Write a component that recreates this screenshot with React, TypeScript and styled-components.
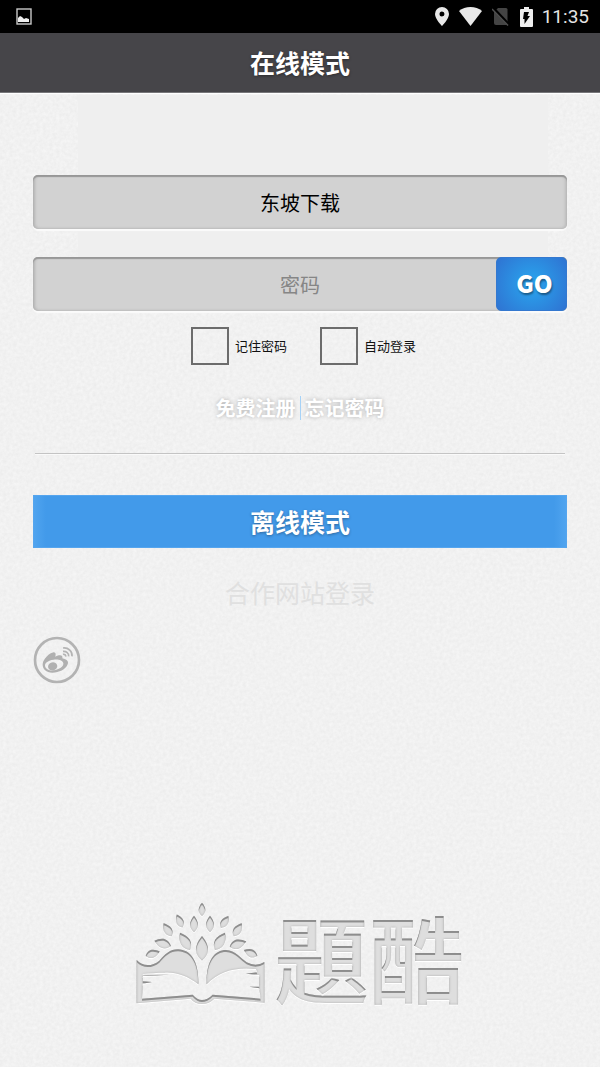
import React from 'react';
import styled, { createGlobalStyle } from 'styled-components';

const GlobalStyle = createGlobalStyle`
  * { box-sizing: border-box; }
  body {
    margin: 0;
    background: #f1f1f1;
    font-family: "Noto Sans CJK SC", sans-serif;
  }
`;

const Screen = styled.div`
  position: relative;
  isolation: isolate;
  display: flex;
  flex-direction: column;
  min-height: 100vh;
`;

const Paper = styled.svg`
  position: absolute;
  inset: 0;
  z-index: -1;
  width: 100%;
  height: 100%;
`;

const StatusBar = styled.div`
  display: flex;
  align-items: center;
  height: 33px;
  padding: 0 11px 0 16px;
  background: #000;
  color: #e4e4e4;
  font: 400 19px/33px Roboto, sans-serif;
`;

const StatusIcons = styled.div`
  display: flex;
  align-items: center;
  gap: 10px;
  margin-left: auto;
  margin-right: 9px;
`;

const TitleBar = styled.header`
  display: flex;
  align-items: center;
  justify-content: center;
  height: 60px;
  padding-bottom: 2px;
  background: #464549;
  border-bottom: 1px solid #77777a;
  box-shadow: 0 1px 1px #fff;
`;

const Title = styled.h1`
  margin: 0;
  color: #fff;
  font-size: 25px;
  line-height: 36px;
  font-weight: 700;
  text-shadow: 0 1px 3px #0006;
`;

const Main = styled.main`
  flex: 1;
  display: flex;
  flex-direction: column;
  padding: 0 33px 63px;
`;

const Form = styled.form`
  display: flex;
  flex-direction: column;
`;

const Fields = styled.div`
  display: flex;
  flex-direction: column;
  gap: 28px;
  margin: 0 -33px;
  padding: 82px 33px 0;
  background: linear-gradient(#efefef, #efefef) 78px 2px / calc(100% - 130px) 100% no-repeat;
`;

const Field = styled.div`
  display: flex;
  height: 54px;
  border-radius: 5px;
  background: #d2d2d2;
  box-shadow:
    inset 0 2px 1px #979797,
    inset 2px 0 3px #b4b4b4,
    inset -2px 0 3px #bcbcbc,
    0 2px 1px #fbfbfb;
`;

const TextInput = styled.input<{ $inset?: boolean }>`
  flex: 1;
  min-width: 0;
  padding: 2px 0 0 ${p => (p.$inset ? '71px' : '0')};
  border: 0;
  outline: 0;
  background: transparent;
  color: #000;
  font: 400 20px/28px "Noto Sans CJK SC", sans-serif;
  text-align: center;
  &::placeholder { color: #868686; opacity: 1; }
`;

const GoButton = styled.button`
  width: 71px;
  padding: 0 0 2px 6px;
  border: 1px solid #3478cf;
  border-radius: 5px;
  background: radial-gradient(circle at 50% 50%, #2a9ce9 20%, #2f73d2 100%);
  color: #fff;
  font: 900 24px/28px "Noto Sans CJK SC", sans-serif;
  text-shadow: 1px 2px 2px #0006;
`;

const Options = styled.div`
  display: flex;
  justify-content: center;
  gap: 33px;
  margin-top: 16px;
  padding-left: 7px;
`;

const Option = styled.label`
  display: flex;
  align-items: center;
  gap: 6px;
  color: #111;
  font-size: 13px;
  line-height: 20px;
`;

const Check = styled.input`
  appearance: none;
  width: 38px;
  height: 38px;
  margin: 0;
  border: 2px solid #6c6c6c;
  &:checked { background: #429aea; }
`;

const Links = styled.nav`
  display: flex;
  justify-content: center;
  align-items: center;
  margin-top: 29px;
  padding-bottom: 31px;
  margin-left: 2px;
  margin-right: 2px;
  border-bottom: 1px solid #c4c4c4;
  box-shadow: 0 1px 0 #fafafa;
`;

const TextLink = styled.a`
  padding: 0 4px;
  color: #fff;
  font-size: 20px;
  line-height: 28px;
  font-weight: 700;
  text-decoration: none;
  text-shadow: 0 0 4px #0004;
`;

const LinkDivider = styled.span`
  width: 1px;
  height: 24px;
  background: #a6d2f7;
`;

const OfflineButton = styled.button`
  height: 53px;
  margin-top: 41px;
  padding: 0 0 2px;
  border: 1px solid #55a5ee;
  background: linear-gradient(90deg, #50a4ef, #429aea 12px, #429aea calc(100% - 12px), #50a4ef);
  color: #fff;
  font: 700 25px/36px "Noto Sans CJK SC", sans-serif;
  text-shadow: 0 1px 3px #0005;
`;

const PartnerTitle = styled.h2`
  margin: 26px 0 0;
  color: #e0e0e0;
  font-size: 25px;
  line-height: 36px;
  font-weight: 400;
  text-align: center;
`;

const WeiboLink = styled.a`
  width: 48px;
  height: 48px;
  margin: 26px 0 40px;
`;

const Logo = styled.svg`
  align-self: center;
  width: 328px;
  max-width: 100%;
  margin-top: auto;
  overflow: visible;
`;

const leaves: [number, number, number, number, number][] = [
  [218, 40, 10, 20, 0],
  [151, 75, 11, 21, -24],
  [194, 84, 12, 25, 0],
  [242, 84, 12, 25, 0],
  [286, 78, 11, 21, 32],
  [115, 101, 12, 23, -32],
  [325, 101, 12, 23, 32],
  [167, 136, 15, 30, -30],
  [218, 157, 18, 37, 0],
  [272, 136, 15, 30, 30],
  [100, 142, 14, 26, -72],
  [326, 144, 14, 26, 72],
  [70, 173, 12, 22, 72],
  [364, 171, 12, 22, -66],
];

function BookLogo() {
  return (
    <Logo viewBox="0 0 328 102" role="img" aria-label="題酷">
      <defs>
        <filter id="engrave" x="-5%" y="-5%" width="110%" height="110%" colorInterpolationFilters="sRGB">
          <feOffset in="SourceAlpha" dx="0" dy="2" result="down" />
          <feGaussianBlur in="down" stdDeviation="0.6" result="soft" />
          <feComposite in="SourceAlpha" in2="soft" operator="out" result="edge" />
          <feFlood floodColor="#777" floodOpacity="0.75" />
          <feComposite in2="edge" operator="in" result="topEdge" />
          <feGaussianBlur in="SourceAlpha" stdDeviation="1" result="around" />
          <feComposite in="SourceAlpha" in2="around" operator="out" result="rim" />
          <feFlood floodColor="#999" floodOpacity="0.7" />
          <feComposite in2="rim" operator="in" result="outline" />
          <feDropShadow in="SourceGraphic" dx="0" dy="1" stdDeviation="0.7" floodColor="#fff" result="base" />
          <feMerge>
            <feMergeNode in="base" />
            <feMergeNode in="outline" />
            <feMergeNode in="topEdge" />
          </feMerge>
        </filter>
      </defs>
      <g filter="url(#engrave)" fill="#dedede">
        <g transform="scale(.3333) translate(-20 -18)">
          {leaves.map(([x, y, w, h, r], i) => (
            <path
              key={i}
              transform={`translate(${x} ${y}) rotate(${r})`}
              d={`M0 ${-h}C${w * 0.5} ${-h * 0.7} ${w} ${-h * 0.3} ${w} ${h * 0.1}C${w} ${h * 0.5} ${w * 0.5} ${h * 0.8} 0 ${h}C${-w * 0.5} ${h * 0.8} ${-w} ${h * 0.5} ${-w} ${h * 0.1}C${-w} ${-h * 0.3} ${-w * 0.5} ${-h * 0.7} 0 ${-h}Z`}
            />
          ))}
          <path d="M22 192C40 212 68 212 90 194C108 174 122 160 146 160C187 161 209 200 207 265C175 240 140 228 106 230C84 230 60 232 40 234L40 236L120 236L40 240L40 256L68 258L40 263L38 308L190 296Q204 312 218 312Q234 312 250 296L394 308L390 277L360 272L390 272L390 237L350 233L384 229L380 219C320 212 270 225 232 265C230 195 255 162 290 162C318 164 334 186 352 199Q380 214 405 198L405 320L255 308Q240 324 218 324Q196 324 184 308L22 322Z" />
        </g>
        <text
          x="138"
          y="95"
          fontSize="95"
          fontWeight="500"
          fontFamily='"Noto Sans CJK TC", sans-serif'
        >
          題酷
        </text>
      </g>
    </Logo>
  );
}

function WeiboMark() {
  return (
    <svg width="48" height="48" viewBox="0 0 144 144" fill="none">
      <circle cx="72" cy="72" r="66" stroke="#b3b3b3" strokeWidth="8" />
      <path
        fill="#b0b0b0"
        fillRule="evenodd"
        d="M29 84C30 70 50 50 62 49C70 49 68 59 67 62C80 55 91 57 88 67C101 70 108 76 104 85C98 101 78 110 58 110C40 110 28 99 29 84ZM36 89C37 99 48 104 62 103C79 101 92 92 91 82C90 73 76 69 62 71C46 73 35 80 36 89Z"
      />
      <ellipse cx="59" cy="91" rx="14" ry="12" transform="rotate(-15 59 91)" fill="#b0b0b0" />
      <g stroke="#b4b4b4" strokeWidth="5">
        <path d="M90 36C106 34 119 46 117 61" />
        <path d="M90 46C100 45 108 52 107 61" />
        <path d="M90 55C95 54 99 57 98 62" />
      </g>
    </svg>
  );
}

function PaperTexture() {
  return (
    <Paper aria-hidden="true">
      <filter id="grain" x="0" y="0" width="100%" height="100%" colorInterpolationFilters="sRGB">
        <feTurbulence type="fractalNoise" baseFrequency="0.3" numOctaves="3" />
        <feColorMatrix values="0.05 0 0 0 0.92  0.05 0 0 0 0.92  0.05 0 0 0 0.92  0 0 0 0 1" />
      </filter>
      <rect width="100%" height="100%" filter="url(#grain)" />
    </Paper>
  );
}

export default function App() {
  return (
    <>
      <GlobalStyle />
      <Screen>
        <PaperTexture />
        <StatusBar>
          <svg width="16" height="17" viewBox="0 0 16 17" fill="none">
            <rect x="1" y="1" width="14" height="15" stroke="#c8c8c8" strokeWidth="1.4" />
            <path d="M2 14V10L4 8L6 9L8 11L10 10L13 11V14Z" fill="#eee" />
          </svg>
          <StatusIcons>
            <svg width="14" height="19" viewBox="0 0 14 19">
              <path fill="#e8e8e8" fillRule="evenodd" d="M7 0a7 7 0 0 1 7 7c0 5-7 12-7 12S0 12 0 7a7 7 0 0 1 7-7Zm0 4.500a2.500 2.500 0 1 0 0 5a2.500 2.500 0 0 0 0-5Z" />
            </svg>
            <svg width="23" height="19" viewBox="0 0 23 19">
              <path fill="#e8e8e8" d="M0 4C6-1.300 17-1.300 23 4L11.500 19Z" />
            </svg>
            <svg width="18" height="19" viewBox="0 0 18 19">
              <path fill="#444" d="M6 1H14Q15.500 1 15.500 2.500V16Q15.500 18 14 18H4Q2 18 2 16V5Z" />
              <path d="M1 1L18 19" stroke="#000" strokeWidth="3" />
              <path d="M0 2L16 18.500" stroke="#505050" strokeWidth="1.500" />
            </svg>
            <svg width="13" height="20" viewBox="0 0 13 20">
              <path fill="#eee" d="M4 0H9V2H12Q13 2 13 3V19Q13 20 12 20H1Q0 20 0 19V3Q0 2 1 2H4Z" />
              <path fill="#000" d="M4 5H9L7.500 9H10L4.500 17V12H3Z" />
            </svg>
          </StatusIcons>
          <span>11:35</span>
        </StatusBar>
        <TitleBar>
          <Title>在线模式</Title>
        </TitleBar>
        <Main>
          <Form onSubmit={e => e.preventDefault()}>
            <Fields>
              <Field>
                <TextInput type="text" aria-label="用户名" defaultValue="东坡下载" />
              </Field>
              <Field>
                <TextInput $inset type="password" aria-label="密码" placeholder="密码" />
                <GoButton type="submit">GO</GoButton>
              </Field>
            </Fields>
            <Options>
              <Option>
                <Check type="checkbox" />
                记住密码
              </Option>
              <Option>
                <Check type="checkbox" />
                自动登录
              </Option>
            </Options>
          </Form>
          <Links>
            <TextLink href="#register">免费注册</TextLink>
            <LinkDivider />
            <TextLink href="#forgot">忘记密码</TextLink>
          </Links>
          <OfflineButton type="button">离线模式</OfflineButton>
          <PartnerTitle>合作网站登录</PartnerTitle>
          <WeiboLink href="#weibo" aria-label="微博">
            <WeiboMark />
          </WeiboLink>
          <BookLogo />
        </Main>
      </Screen>
    </>
  );
}
